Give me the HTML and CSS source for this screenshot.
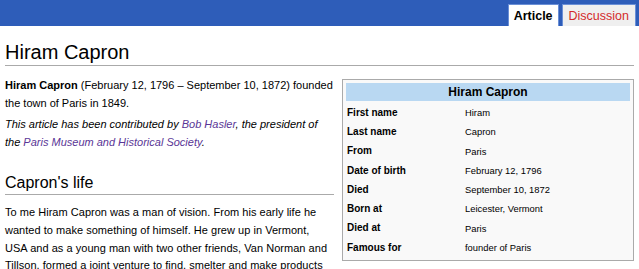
FILE: index.html
```html
<!DOCTYPE html>
<html lang="en">

<head>
    <meta charset="UTF-8">
    <meta name="viewport" content="width=device-width, initial-scale=1.0">
    <title>Hiram Capron</title>
    <link rel="stylesheet" href="styles.css">
</head>

<body>
    <div class="topbar">
        <ul class="tabs">
            <li class="tab selected"><a href="#">Article</a></li>
            <li class="tab"><a href="#">Discussion</a></li>
        </ul>
    </div>

    <div class="content">
        <h1 class="page-title">Hiram Capron</h1>

        <table class="infobox">
            <tr>
                <th colspan="2" class="infobox-title">Hiram Capron</th>
            </tr>
            <tr class="first-row"><th>First name</th><td>Hiram</td></tr>
            <tr><th>Last name</th><td>Capron</td></tr>
            <tr><th>From</th><td>Paris</td></tr>
            <tr><th>Date of birth</th><td>February 12, 1796</td></tr>
            <tr><th>Died</th><td>September 10, 1872</td></tr>
            <tr><th>Born at</th><td>Leicester, Vermont</td></tr>
            <tr><th>Died at</th><td>Paris</td></tr>
            <tr><th>Famous for</th><td>founder of Paris</td></tr>
        </table>

        <p><b>Hiram Capron</b> (February 12, 1796 &ndash; September 10, 1872) founded the town of Paris in 1849.</p>

        <p class="note">This article has been contributed by <a href="#">Bob Hasler</a>, the president of
            the <a href="#">Paris Museum and Historical Society</a>.</p>

        <h2>Capron's life</h2>

        <p class="story">To me Hiram Capron was a man of vision. From his early life he wanted to make something of himself.
            He grew up in Vermont, USA and as a young man with two other friends, Van Norman and Tillson, formed
            a joint venture to find, smelter and make products from iron ore.</p>
    </div>
</body>

</html>
```

FILE: styles.css
```css
/* Reset some default styles */
body, h1, h2, p, ul {
    margin: 0;
    padding: 0;
}

body {
    font-family: 'Liberation Sans', Arial, sans-serif;
    font-size: 11px;
    line-height: 1.6;
    color: #000;
    background-color: #fff;
    overflow: hidden;
}

a {
    color: #5a3696;
    text-decoration: none;
}

/* Top bar with tabs */
.topbar {
    height: 26px;
    background-color: #2e5db9;
    display: flex;
    justify-content: flex-end;
    align-items: flex-end;
    padding-right: 3px;
}

.tabs {
    list-style: none;
    display: flex;
    gap: 3px;
}

.tab {
    height: 21px;
    border: 1px solid #6a8fd6;
    border-bottom: none;
    background-color: #efefef;
    font-size: 12.5px;
    line-height: 23px;
    padding: 0 6px;
}

.tab a {
    color: #d42a2a;
}

.tab.selected {
    background-color: #fff;
    padding: 0 5px;
    font-weight: bold;
}

.tab.selected a {
    color: #000;
}

/* Page content */
.content {
    padding: 0 5px;
}

.page-title {
    font-size: 20px;
    font-weight: normal;
    line-height: 24px;
    margin-top: 14px;
    padding-bottom: 1px;
    border-bottom: 1px solid #aaa;
}

p {
    margin-bottom: 4px;
}

.content > p:first-of-type {
    margin-top: 11px;
}

.note {
    font-style: italic;
}

.story {
    letter-spacing: 0.03px;
}

h2 {
    font-size: 16px;
    font-weight: normal;
    line-height: 20px;
    margin-top: 22px;
    margin-bottom: 9px;
    padding-bottom: 1px;
    border-bottom: 1px solid #aaa;
    overflow: hidden;
}

/* Infobox */
.infobox {
    float: right;
    width: 292px;
    margin: 13px 0 8px 8.5px;
    padding: 3px;
    border: 1px solid #aaa;
    background-color: #f9f9f9;
    border-spacing: 0;
    box-sizing: border-box;
    font-size: 9.4px;
    line-height: 1;
}

.infobox th,
.infobox td {
    height: 19.3px;
    padding: 0 1px;
    text-align: left;
    vertical-align: middle;
}

.infobox th {
    width: 116px;
    font-size: 10px;
}

.infobox .first-row th,
.infobox .first-row td {
    padding-top: 2px;
}

.infobox .infobox-title {
    height: 18px;
    background-color: #b9d8f2;
    text-align: center;
    font-size: 12px;
}
```
